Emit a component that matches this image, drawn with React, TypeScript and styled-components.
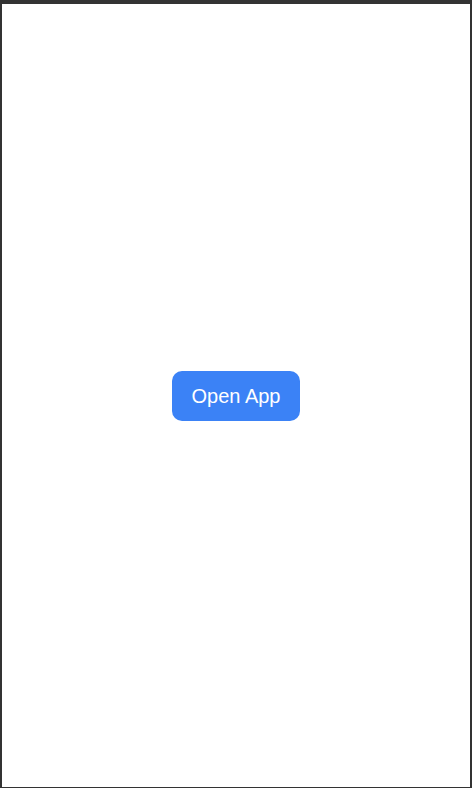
import React from "react";
import styled, { createGlobalStyle } from "styled-components";

const GlobalStyle = createGlobalStyle`
  html, body {
    margin: 0;
    padding: 0;
    background: #ffffff;
  }
  * { box-sizing: border-box; }
`;

const Frame = styled.div`
  width: 472px;
  height: 788px;
  border-style: solid;
  border-color: #333333;
  border-width: 4px 2px 1px 2px;
  background: #ffffff;
  display: flex;
  align-items: center;
  justify-content: center;
  font-family: "Liberation Sans", Arial, sans-serif;
`;

const OpenButton = styled.button`
  height: 50px;
  padding: 0 20px;
  border: none;
  border-radius: 10px;
  background: #3b82f6;
  color: #ffffff;
  font-family: "Liberation Sans", Arial, sans-serif;
  font-size: 20px;
  line-height: 1;
  cursor: pointer;
`;

export default function App() {
  return (
    <>
      <GlobalStyle />
      <Frame>
        <OpenButton>Open App</OpenButton>
      </Frame>
    </>
  );
}
